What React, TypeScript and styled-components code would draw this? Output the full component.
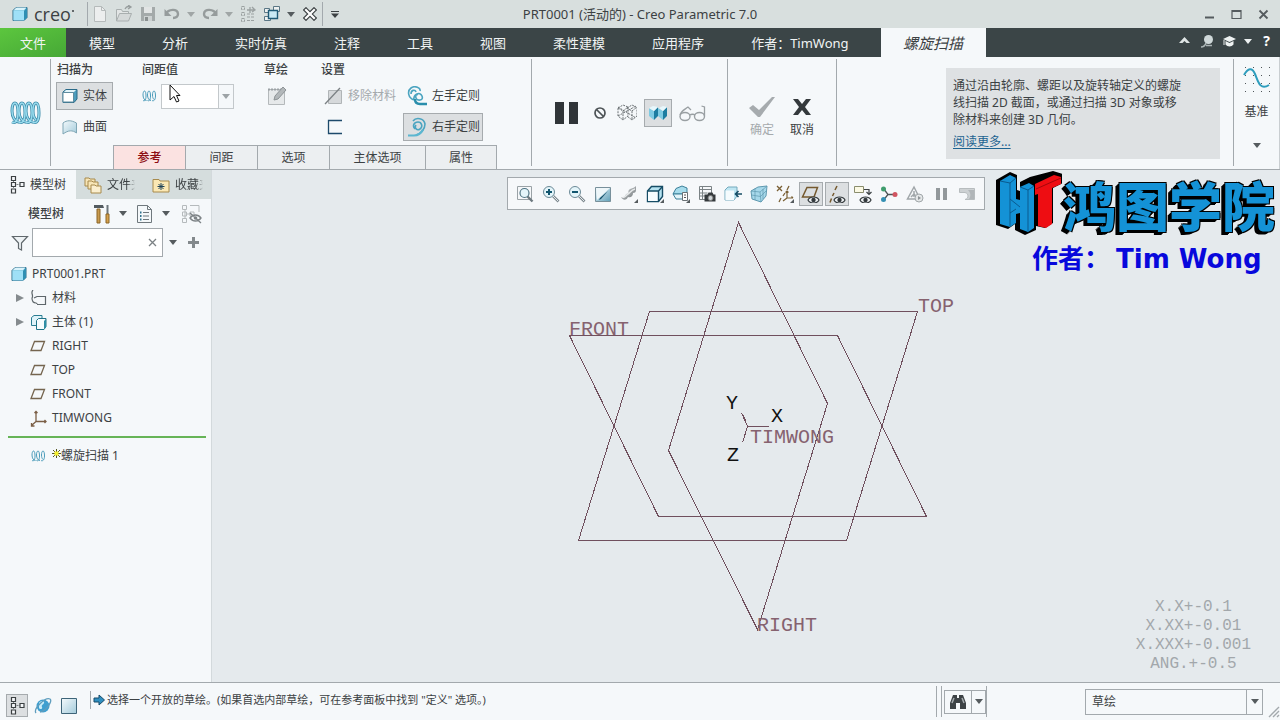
import React from "react";
import styled, { createGlobalStyle, css } from "styled-components";

const line = "#a3a9ad";

const GlobalStyle = createGlobalStyle`
  * { box-sizing: border-box; }
  body { margin: 0; }
  body, button, input, select {
    font-family: "Noto Sans", "Noto Sans CJK SC", sans-serif;
    font-size: 12px;
    line-height: 16px;
    color: #3c4143;
  }
  button { border: 0; padding: 0; background: none; }
  svg { display: block; flex: none; }
`;

const Page = styled.div`
  min-height: 100vh;
  display: flex;
  flex-direction: column;
  background: #f5f8fa;
`;

const GradientDefs = styled.svg`
  position: absolute;
`;

/* ---------- title bar ---------- */

const TitleBar = styled.header`
  height: 28px;
  display: grid;
  grid-template-columns: 1fr auto 1fr;
  align-items: center;
  background: #d8dfde;
`;

const QuickAccess = styled.div`
  display: flex;
  align-items: center;
  height: 28px;
`;

const Brand = styled.div`
  width: 87px;
  padding-left: 12px;
  display: flex;
  align-items: center;
  gap: 6px;
`;

const BrandName = styled.span`
  display: flex;
  align-items: center;
  gap: 1px;
  font-family: "Open Sans", sans-serif;
  font-size: 18px;
  line-height: 24px;
`;

const QuickButton = styled.button<{ $narrow?: boolean }>`
  width: ${(p) => (p.$narrow ? 14 : 24)}px;
  height: 24px;
  display: flex;
  align-items: center;
  justify-content: center;
`;

const QuickRule = styled.span`
  width: 1px;
  height: 24px;
  background: ${line};
`;

const WindowTitle = styled.h1`
  margin: 0;
  font-size: 13px;
  font-weight: 400;
  line-height: 20px;
`;

const WindowButtons = styled.div`
  display: flex;
  justify-content: flex-end;
  padding-right: 3px;
`;

const WindowButton = styled.button`
  width: 27px;
  height: 24px;
  display: flex;
  align-items: center;
  justify-content: center;
`;

/* ---------- menu tabs ---------- */

const MenuBar = styled.nav`
  height: 29px;
  display: flex;
  background: #3b4547;
`;

const MenuTab = styled.button<{ $kind?: "file" | "active" }>`
  padding: 0 24px 0 23px;
  font-size: 13px;
  line-height: 20px;
  color: #f1f4f4;
  ${(p) =>
    p.$kind === "file" &&
    css`
      width: 66px;
      padding: 0;
      background: linear-gradient(160deg, #5cc63e, #46a836);
    `}
  ${(p) =>
    p.$kind === "active" &&
    css`
      width: 105px;
      margin-left: 8px;
      padding: 0;
      font-size: 15px;
      font-style: italic;
      color: #3c4143;
      background: #f5f8fa;
    `}
`;

const MenuTools = styled.div`
  margin-left: auto;
  padding: 0 2px 3px 0;
  display: flex;
  align-items: center;
`;

const MenuTool = styled.button<{ $w: number }>`
  width: ${(p) => p.$w}px;
  height: 20px;
  display: flex;
  align-items: center;
  justify-content: center;
  font-size: 14px;
  font-weight: 700;
  color: #fff;
`;

/* ---------- ribbon ---------- */

const Ribbon = styled.section`
  height: 113px;
  display: flex;
  border-bottom: 1px solid ${line};
`;

const RibbonRule = styled.span`
  width: 1px;
  margin: 2px 0 3px;
  background: ${line};
`;

const FeatureIcon = styled.div`
  width: 50px;
  display: flex;
  align-items: center;
  justify-content: center;
`;

const Dashboard = styled.div`
  width: 480px;
  display: flex;
  flex-direction: column;
  justify-content: space-between;
`;

const Settings = styled.div`
  display: flex;
  gap: 28px;
  padding: 4px 0 0 5px;
`;

const SettingColumn = styled.div<{ $w?: number }>`
  display: flex;
  flex-direction: column;
  gap: 3px;
  width: ${(p) => (p.$w ? `${p.$w}px` : "auto")};
`;

const SettingTitle = styled.h2`
  margin: 0;
  height: 18px;
  padding-left: 1px;
  font-size: 12px;
  font-weight: 500;
  line-height: 18px;
`;

const SettingRow = styled.div`
  display: flex;
  align-items: center;
  height: 28px;
`;

const RibbonButton = styled.button<{ $on?: boolean; $w?: number; $off?: boolean }>`
  width: ${(p) => (p.$w ? `${p.$w}px` : "auto")};
  height: 28px;
  padding: 0 3px;
  display: flex;
  align-items: center;
  gap: 5px;
  white-space: nowrap;
  color: ${(p) => (p.$off ? "#a5aaad" : "#3c4143")};
  border: 1px solid ${(p) => (p.$on ? "#a6abae" : "transparent")};
  background: ${(p) => (p.$on ? "#dcdfe1" : "none")};
`;

const PitchInput = styled.input`
  width: 58px;
  height: 25px;
  margin-left: 4px;
  border: 1px solid #c3c8cb;
  background: #fff;
`;

const PitchArrow = styled.button`
  width: 16px;
  height: 25px;
  margin-left: -1px;
  display: flex;
  align-items: center;
  justify-content: center;
  border: 1px solid #c3c8cb;
`;

const PanelTabs = styled.div`
  display: flex;
  padding-left: 62px;
`;

const PanelTab = styled.button<{ $w: number; $required?: boolean }>`
  width: ${(p) => p.$w}px;
  height: 24px;
  border: 1px solid ${line};
  border-bottom: 0;
  border-right-width: 0;
  &:last-child { border-right-width: 1px; }
  color: ${(p) => (p.$required ? "#8c0b12" : "#3c4143")};
  font-weight: ${(p) => (p.$required ? 500 : 400)};
  background: ${(p) => (p.$required ? "#fbe2e1" : "#eceff1")};
`;

const PreviewGroup = styled.div`
  width: 195px;
  padding-left: 19px;
  display: flex;
  align-items: center;
  gap: 3px;
`;

const ConfirmGroup = styled.div`
  width: 108px;
  display: flex;
  align-items: center;
  justify-content: center;
`;

const ConfirmButton = styled.button<{ $off?: boolean }>`
  width: 40px;
  padding-top: 8px;
  display: flex;
  flex-direction: column;
  align-items: center;
  gap: 4px;
  color: ${(p) => (p.$off ? "#a5aaad" : "#3c4143")};
`;

const HelpBox = styled.aside`
  width: 274px;
  height: 91px;
  margin: 11px 13px 0 auto;
  padding: 9px 7px;
  line-height: 17px;
  white-space: nowrap;
  background: #dee1e3;
`;

const HelpText = styled.p`
  margin: 0 0 5px;
`;

const HelpLink = styled.a`
  color: #1d6391;
  text-underline-offset: 2px;
`;

const DatumGroup = styled.button`
  width: 46px;
  padding: 9px 0 0;
  display: flex;
  flex-direction: column;
  align-items: center;
  gap: 11px;
  border-right: 1px solid #c9ced1;
`;

/* ---------- model tree ---------- */

const Workspace = styled.main`
  flex: 1;
  display: flex;
`;

const Sidebar = styled.aside`
  width: 212px;
  display: flex;
  flex-direction: column;
  border-right: 1px solid #d3d9dc;
`;

const SideTabs = styled.div`
  height: 29px;
  display: flex;
  background: #d5dddd;
`;

const SideTab = styled.button<{ $on?: boolean; $w: number }>`
  width: ${(p) => p.$w}px;
  padding-left: ${(p) => (p.$on ? 10 : 8)}px;
  display: flex;
  align-items: center;
  gap: 5px;
  background: ${(p) => (p.$on ? "#f5f8fa" : "none")};
`;

const FadedLabel = styled.span`
  width: 28px;
  overflow: hidden;
  white-space: nowrap;
  mask-image: linear-gradient(90deg, #000 75%, transparent);
`;

const TreeHeader = styled.div`
  height: 29px;
  padding-left: 28px;
  display: flex;
  align-items: center;
`;

const TreeTitle = styled.h2`
  margin: 0;
  width: 64px;
  font-size: 12px;
  font-weight: 500;
`;

const TreeTool = styled.button<{ $w: number }>`
  width: ${(p) => p.$w}px;
  height: 24px;
  display: flex;
  align-items: center;
  justify-content: center;
`;

const SearchRow = styled.div`
  height: 29px;
  padding-left: 8px;
  display: flex;
  align-items: center;
`;

const SearchField = styled.label`
  width: 131px;
  height: 29px;
  display: flex;
  align-items: center;
  border: 1px solid ${line};
  background: #fff;
`;

const SearchInput = styled.input`
  flex: 1;
  min-width: 0;
  height: 24px;
  border: 0;
  outline: 0;
  background: none;
`;

const Tree = styled.ul`
  margin: 5px 5px 0 8px;
  padding: 0;
  list-style: none;
`;

const TreeNode = styled.li<{ $root?: boolean }>`
  height: 24px;
  padding-left: ${(p) => (p.$root ? 3 : 8)}px;
  display: flex;
  align-items: center;
`;

const Expander = styled.span`
  width: 14px;
`;

const NodeIcon = styled.span<{ $root?: boolean }>`
  width: ${(p) => (p.$root ? 21 : 22)}px;
`;

const InsertLine = styled.li`
  height: 2px;
  margin: 6px 0;
  background: #66b457;
`;

/* ---------- graphics area ---------- */

const Viewport = styled.section`
  position: relative;
  flex: 1;
  min-width: 0;
  display: flex;
  flex-direction: column;
  align-items: center;
  padding-top: 7px;
  background: #e5eaed;
`;

const ViewToolbar = styled.div`
  height: 33px;
  padding: 0 5px;
  display: flex;
  align-items: center;
  gap: 2px;
  border: 1px solid ${line};
  background: #f6f8fa;
`;

const ViewButton = styled.button<{ $on?: boolean }>`
  width: 24px;
  height: 24px;
  display: flex;
  align-items: center;
  justify-content: center;
  border: 1px solid ${(p) => (p.$on ? "#a6abae" : "transparent")};
  background: ${(p) => (p.$on ? "#dcdfe1" : "none")};
`;

const Drawing = styled.svg`
  margin-top: 5px;
  overflow: visible;
  font-family: "Liberation Sans Narrow", "Liberation Mono", monospace;
  font-size: 20px;
  fill: #86626f;
`;

const Watermark = styled.div`
  position: absolute;
  top: 0;
  right: 5px;
`;

const WatermarkName = styled.div`
  display: flex;
  align-items: center;
  gap: 1px;
  height: 68px;
  font-family: "Noto Sans CJK SC", sans-serif;
  font-size: 53px;
  font-weight: 900;
  line-height: 68px;
  color: #1492d6;
  text-shadow: -1px -1px 0 #000, 1px -1px 0 #000, 1px 1px 0 #000, -2px 1px 0 #000, -3px 2px 0 #000, -4px 3px 0 #000;
`;

const WatermarkAuthor = styled.div`
  display: flex;
  gap: 6px;
  padding-left: 36px;
  margin-top: 5px;
  font-family: "DejaVu Sans", "Noto Sans CJK SC", sans-serif;
  font-size: 26px;
  font-weight: 700;
  line-height: 32px;
  color: #0808dc;
`;

const Tolerances = styled.div`
  position: absolute;
  right: 29px;
  bottom: 8px;
  font-family: "Liberation Mono", monospace;
  font-size: 16px;
  line-height: 19px;
  text-align: center;
  color: #a2a7ab;
`;

/* ---------- status bar ---------- */

const StatusBar = styled.footer`
  height: 38px;
  display: flex;
  align-items: center;
  border-top: 1px solid ${line};
`;

const StatusToggles = styled.div`
  width: 90px;
  padding: 8px 0 0 6px;
  display: flex;
  gap: 4px;
`;

const StatusToggle = styled.button<{ $on?: boolean }>`
  width: 22px;
  height: 23px;
  display: flex;
  align-items: center;
  justify-content: center;
  border: 1px solid ${(p) => (p.$on ? "#a6abae" : "transparent")};
  background: ${(p) => (p.$on ? "#dcdfe1" : "none")};
`;

const Message = styled.p`
  flex: 1;
  margin: 0 0 4px;
  padding-left: 2px;
  height: 18px;
  display: flex;
  align-items: center;
  gap: 2px;
  font-size: 11px;
  border-left: 1px solid ${line};
`;

const FinderGroup = styled.div`
  height: 31px;
  padding: 0 1px 0 4px;
  margin-right: 98px;
  display: flex;
  align-items: center;
  border: solid ${line};
  border-width: 0 1px;
  &::before {
    content: "";
    height: 31px;
    margin-right: 2px;
    border-left: 1px solid ${line};
  }
`;

const FinderButton = styled.button<{ $w: number }>`
  width: ${(p) => p.$w}px;
  height: 24px;
  margin-right: -1px;
  display: flex;
  align-items: center;
  justify-content: center;
  border: 1px solid ${line};
`;

const FilterField = styled.label`
  width: 178px;
  height: 26px;
  display: flex;
  align-items: center;
  border: 1px solid ${line};
`;

const FilterSelect = styled.select`
  flex: 1;
  height: 24px;
  padding: 0 6px;
  appearance: none;
  border: 0;
  background: none;
`;

const FilterArrow = styled.span`
  width: 16px;
  height: 24px;
  display: flex;
  align-items: center;
  justify-content: center;
  border-left: 1px solid ${line};
`;

const Pointer = styled.svg`
  position: absolute;
  left: 169px;
  top: 84px;
`;

/* ---------- icons ---------- */

type IconProps = { w?: number; h?: number; children: React.ReactNode };

const Icon = ({ w = 18, h = 18, children }: IconProps) => (
  <svg width={w} height={h} viewBox={`0 0 ${w} ${h}`} fill="none" aria-hidden="true">
    {children}
  </svg>
);

const Caret = ({ color = "#555b5e" }: { color?: string }) => (
  <Icon w={8} h={5}><path d="M0 0h8L4 5z" fill={color} /></Icon>
);

const Cube = () => (
  <Icon w={16} h={16}>
    <path d="M1 4.500l3-3h11v10l-3 3H1z" fill="#7fc3dc" stroke="#2a6a88" />
    <path d="M1.500 4.500H12v10H1.500z" fill="#9fe0f7" />
    <path d="M12 5l3-3.500v10l-3 3z" fill="#2f8fb3" />
    <path d="M2 4l2.500-2.500h10L12 4z" fill="#d9f3fb" />
  </Icon>
);

const coilPath = (x: number) =>
  `M${x - 4} 21c4 2 6-2 6-9 0-6-1-10-3-10s-3 4-3 8c0 6 3 11 7 11`;

const Coil = ({ big }: { big?: boolean }) => {
  const turns = big ? [7, 14, 21] : [8, 17];
  const last = big ? "M24 21c4 2 6-2 6-9 0-6-1-10-3-10s-3 4-3 8c0 4 1 7 3 9" : "M22 21c4 2 7-2 7-9 0-6-1-10-3-10s-3 4-3 8c0 4 1 7 3 9";
  const paths = [...turns.map(coilPath), last];
  return (
    <svg width={big ? 32 : 16} height={big ? 24 : 12} viewBox="0 0 32 24" fill="none" aria-hidden="true">
      {paths.map((d) => <path key={d} d={d} stroke={big ? "#3d8dab" : "#4b9cba"} strokeWidth={big ? 3 : 2} />)}
      {big && paths.map((d) => <path key={d} d={d} stroke="#9adcee" strokeWidth="1.400" />)}
    </svg>
  );
};

const TreeGlyph = () => (
  <Icon w={15} h={19}>
    <path d="M3.500 5v9M3.500 9.500H10" stroke="#7d8386" strokeDasharray="2 1" />
    <path d="M1.500 1.500h4v4h-4zM1.500 7.500h4v4h-4zM1.500 14h4v4h-4zM10 7.500h4v4h-4z" fill="#f5f8fa" stroke="#3c4143" strokeWidth="1.200" />
  </Icon>
);

const PlaneGlyph = () => (
  <Icon w={16} h={12}><path d="M4.500 1.500h10l-3.500 9H1z" stroke="#75654f" strokeWidth="1.300" /></Icon>
);

const Eye = () => (
  <g>
    <path d="M7 15c2-4 9-4 11 0-2 4-9 4-11 0z" fill="#eef1f2" stroke="#33393c" strokeWidth="1.200" />
    <circle cx="12.500" cy="15" r="2.200" fill="#33393c" />
  </g>
);

const Lens = ({ sign }: { sign: "plus" | "minus" }) => (
  <Icon>
    <path d="M11 11l5.500 5.500" stroke="#7e8a90" strokeWidth="2.600" />
    <path d="M11 11l5 5" stroke="#e3e8ea" />
    <circle cx="7" cy="7" r="5.500" fill="#e4f5fa" stroke="#6c8a97" />
    <path d={sign === "plus" ? "M4 7h6M7 4v6" : "M4 7h6"} stroke="#12566f" strokeWidth="2" />
  </Icon>
);

const Corner = () => <path d="M18 14v4h-4z" fill="#555b5e" />;

const viewTools: { name: string; on?: boolean; icon: React.ReactNode }[] = [
  { name: "重新调整", icon: <Icon><path d="M1.500 1.500h14v13h-14z" stroke="#9aa2a6" /><path d="M11 11l5.500 5.500" stroke="#6e7a80" strokeWidth="2.400" /><circle cx="8.500" cy="8" r="4.500" fill="#e4f5fa" stroke="#4f7483" strokeWidth="1.200" /></Icon> },
  { name: "放大", icon: <Lens sign="plus" /> },
  { name: "缩小", icon: <Lens sign="minus" /> },
  { name: "重画", icon: <Icon><path d="M1.500 2.500h15v14h-15z" fill="url(#steel)" stroke="#78909b" /><path d="M2 3h14L3 15z" fill="#eef6f9" /><path d="M14 6l-7 8-2 1 1-2z" fill="#134c66" /></Icon> },
  { name: "渲染选项", icon: <Icon><path d="M1 12c2 4 6 3 7 0 3 1 5-1 5-4 2 0 3-1 3-3V1c-2 2-4 2-6 3-2 1-2 3-1 5-2-1-3 0-4 2-1 2-2 2-4 1z" fill="url(#grey)" /><path d="M3 12c2 1 3-2 5-3s3-4 7-5" stroke="#e6e9ea" strokeWidth="1.500" /><Corner /></Icon> },
  { name: "显示样式", icon: <Icon><path d="M1.500 6l4-4.500h11v10l-4 5h-11z" fill="#b5e2f0" stroke="#174d66" strokeWidth="1.400" /><path d="M2 6h10v10H2z" fill="#f7fcfe" /><path d="M1.500 6h11v10.500M12.500 6l4-4.500" stroke="#174d66" strokeWidth="1.400" /><Corner /></Icon> },
  { name: "已保存方向", icon: <Icon><path d="M4 3.500l6-2.500 5 2v6H1z" fill="#a6dcec" stroke="#3b7f99" /><path d="M1 9h13l-2 5H4z" fill="#e3f4f9" stroke="#3b7f99" /><path d="M10.500 7.500h5v8h-5z" fill="#fff" stroke="#6a7175" /><path d="M12 10h2M12 12.500h2" stroke="#555" /><Corner /></Icon> },
  { name: "视图管理器", icon: <Icon><path d="M1.500 1.500h12v13h-12zM1.500 4.500h12M1.500 8h8M1.500 11h8M4.500 1.500v13" stroke="#7b8285" /><path d="M6.500 9.500h3l1-2h4l1 2h2v7h-11z" fill="#34393c" /><circle cx="12.500" cy="13" r="2.500" fill="#cfd5d8" stroke="#777" /></Icon> },
  { name: "透视图", icon: <Icon><path d="M1 5l3-3h9v9l-3 4H1z" fill="#bfe6f2" stroke="#74aabd" /><path d="M1.500 5.500H10V15H1.500z" fill="#f4fbfd" /><path d="M18 9h-6M14.500 6l-3 3 3 3" stroke="#174d66" strokeWidth="1.600" /></Icon> },
  { name: "截面", icon: <Icon><path d="M1 6l7-4 9-1-1 10-5 6-9-3z" fill="#a6d8ea" stroke="#5f99b0" /><path d="M1 6l9 1 7-6M10 7l1 10M5 3.500V15M13 4v10M1.500 10l9 1.500L16 6" stroke="#5f99b0" strokeWidth=".7" /></Icon> },
  { name: "基准显示过滤器", icon: <Icon><path d="M1 1l5 5M6 1L1 6M13 1l-2 4M9 8l-2 3M5 13l-2 4" stroke="#7a6035" strokeWidth="1.300" /><path d="M11 6v7h6M11 13l-4 3M9.500 7.500L11 6l1.500 1.500M15.500 11.500L17 13" stroke="#7a6035" strokeWidth="1.200" /><Corner /></Icon> },
  { name: "平面显示", on: true, icon: <Icon w={20}><path d="M6 2.500h10.500L13 12H1.500z" stroke="#75592e" strokeWidth="1.500" /><Eye /></Icon> },
  { name: "轴显示", on: true, icon: <Icon w={20}><path d="M10 1L8 5M7 8l-1.500 3M4.500 13.500l-1.500 4" stroke="#75592e" strokeWidth="1.500" /><Eye /></Icon> },
  { name: "注释显示", icon: <Icon w={20}><path d="M1.500 1.500h9v6h-9z" fill="#fbf9e4" stroke="#8a8d6d" /><path d="M11 4.500h5V9M13.500 7l2.500 2.500L18.500 7" stroke="#3c4143" strokeWidth="1.200" /><Eye /></Icon> },
  { name: "旋转中心", icon: <Icon><path d="M3.500 3.500L8 9.500l-4 5M8 9.500h7" stroke="#4c5356" strokeWidth="1.300" /><circle cx="3.500" cy="4" r="2.500" fill="#3f9d6d" /><circle cx="3.500" cy="14.500" r="2.500" fill="#348fb3" /><circle cx="15" cy="9.500" r="2.500" fill="#d05561" /></Icon> },
  { name: "仿真", icon: <Icon><path d="M8 2l6 12H1.500zM8 6v6M5 12l3-3 3 3" stroke="#a1a7aa" strokeWidth="1.500" /><circle cx="13" cy="13" r="4" fill="#e4e7e8" stroke="#a1a7aa" /><path d="M12 11l3 2-3 2z" fill="#8e9497" /></Icon> },
  { name: "暂停仿真", icon: <Icon><path d="M4 3h4v12H4zM11 3h4v12h-4z" fill="#92989b" /></Icon> },
  { name: "仿真结果", icon: <Icon><path d="M1.500 3.500h15v11H7c4-1 4-6 0-7H1.500z" fill="#cdd1d3" stroke="#b7bcbe" /><path d="M10 5h6v9h-5c2-3 2-6-1-9z" fill="#b1b6b9" /></Icon> },
];

const menuItems = ["模型", "分析", "实时仿真", "注释", "工具", "视图", "柔性建模", "应用程序", "作者：TimWong"];

const planes = ["RIGHT", "TOP", "FRONT"];

const Arrow = () => (
  <Icon w={8} h={10}><path d="M0 1l8 4-8 4z" fill="#858b8e" /></Icon>
);

const HandCurl = ({ right }: { right?: boolean }) => (
  <Icon w={20} h={20}>
    {right ? (
      <>
        <path d="M6 4c3-4 11-3 12 3 0 5-4 10-9 11M8 12c-3-3-1-7 3-7s5 5 2 7-6-1-4-4" stroke="#4ba4c0" strokeWidth="1.600" />
        <path d="M1 18.500h6c4 0 7-2 9-6" stroke="#5bb6d0" strokeWidth="2.200" />
      </>
    ) : (
      <>
        <path d="M7 14C1 12 0 5 4 2s10 0 9 3M7 14c-1-6 6-9 8-4s-5 5-6 2 1-4 2-3M4 8c0-4 4-5 5-2" stroke="#4ba4c0" strokeWidth="1.600" />
        <path d="M8 13c0 4 2 5 5 5h7" stroke="#2a8eac" strokeWidth="2.400" />
      </>
    )}
  </Icon>
);

export default function App() {
  return (
    <Page>
      <GlobalStyle />
      <GradientDefs width="0" height="0" aria-hidden="true">
        <defs>
          <linearGradient id="steel" x1="0" y1="0" x2="1" y2="1">
            <stop offset="0" stopColor="#eef8fb" />
            <stop offset="1" stopColor="#5f9fb8" />
          </linearGradient>
          <linearGradient id="sheet" x1="0" y1="0" x2="1" y2="1">
            <stop offset="0" stopColor="#f4fafc" />
            <stop offset="1" stopColor="#a3cbdb" />
          </linearGradient>
          <linearGradient id="grey" x1="0" y1="0" x2="1" y2="1">
            <stop offset="0" stopColor="#d8dcde" />
            <stop offset="1" stopColor="#6d7376" />
          </linearGradient>
        </defs>
      </GradientDefs>

      <TitleBar>
        <QuickAccess>
          <Brand><Cube /><BrandName>creo<Icon w={2} h={8}><circle cx="1" cy="1" r="1" fill="#3c4143" /></Icon></BrandName></Brand>
          <QuickRule />
          <QuickButton aria-label="新建"><Icon><path d="M3.500 1.500h7l4 4v11h-11z" fill="#eceeee" stroke="#b5baba" /><path d="M10.500 1.500v4h4" stroke="#b5baba" /></Icon></QuickButton>
          <QuickButton aria-label="打开"><Icon><path d="M1.500 16V4.500h5l1 2h6V9" fill="#e2e5e5" stroke="#a9afaf" /><path d="M1.500 16l3-7.500h12l-3 7.500z" fill="#d5d9d9" stroke="#a9afaf" /><path d="M10 4c1-2 3-3 5-2M13 0l3 2-3 2" stroke="#979d9d" strokeWidth="1.300" /></Icon></QuickButton>
          <QuickButton aria-label="保存"><Icon><path d="M2 2h14v14H2z" fill="#a4aaaa" /><path d="M5 2h8v6H5z" fill="#e2e5e5" /><path d="M5 11h8v5H5z" fill="#cdd2d2" /><path d="M6 12h3v4H6z" fill="#8a9090" /></Icon></QuickButton>
          <QuickButton aria-label="撤销"><Icon><path d="M3 9c2-5 12-6 12 0 0 3-2 4-5 4" stroke="#969c9c" strokeWidth="2.400" /><path d="M1.500 4v7h7z" fill="#969c9c" /></Icon></QuickButton>
          <QuickButton $narrow aria-label="撤销列表"><Caret color="#a0a6a6" /></QuickButton>
          <QuickButton aria-label="重做"><Icon><path d="M15 9C13 4 3 3 3 9c0 3 2 4 5 4" stroke="#969c9c" strokeWidth="2.400" /><path d="M16.500 4v7h-7z" fill="#969c9c" /></Icon></QuickButton>
          <QuickButton $narrow aria-label="重做列表"><Caret color="#a0a6a6" /></QuickButton>
          <QuickButton aria-label="重新生成"><Icon><path d="M2.500 1.500h3v3h-3zM2.500 7.500h3v3h-3zM2.500 13.500h3v3h-3zM8 9h7M8 12h7M8 15.500h7" stroke="#9ba1a1" strokeDasharray="3 1" /><path d="M8 5h7M11 2v6M13 2l3 3-3 2" stroke="#9ba1a1" strokeWidth="1.300" /></Icon></QuickButton>
          <QuickButton aria-label="窗口"><Icon><path d="M1.500 3.500h5v4h-5zM1.500 11.500h6v4h-6zM10.500 1.500h6v5h-6z" fill="#eef1f1" stroke="#5b7785" /><path d="M5.500 5.500h9v8h-9z" fill="#c9e9f4" stroke="#1f5a76" strokeWidth="1.400" /></Icon></QuickButton>
          <QuickButton $narrow aria-label="窗口列表"><Caret /></QuickButton>
          <QuickButton aria-label="关闭"><Icon w={14} h={14}><path d="M3 3l8 8M11 3l-8 8" stroke="#3c4143" strokeWidth="4.500" strokeLinecap="square" /><path d="M3 3l8 8M11 3l-8 8" stroke="#fff" strokeWidth="2.200" strokeLinecap="square" /></Icon></QuickButton>
          <QuickRule />
          <QuickButton aria-label="自定义快速访问"><Icon w={10} h={9}><path d="M1 1.500h8" stroke="#3c4143" /><path d="M1 3.500h8L5 8z" fill="#3c4143" /></Icon></QuickButton>
        </QuickAccess>
        <WindowTitle>PRT0001 (活动的) - Creo Parametric 7.0</WindowTitle>
        <WindowButtons>
          <WindowButton aria-label="最小化"><Icon w={11} h={11}><path d="M1 8.500h9" stroke="#555b5e" strokeWidth="2" /></Icon></WindowButton>
          <WindowButton aria-label="最大化"><Icon w={11} h={11}><path d="M1 1.500h9v8H1zM1 2.500h9" stroke="#555b5e" strokeWidth="1.200" /></Icon></WindowButton>
          <WindowButton aria-label="关闭窗口"><Icon w={11} h={11}><path d="M1.500 1.500l8 8M9.500 1.500l-8 8" stroke="#555b5e" strokeWidth="1.800" /></Icon></WindowButton>
        </WindowButtons>
      </TitleBar>

      <MenuBar>
        <MenuTab $kind="file">文件</MenuTab>
        {menuItems.map((m) => <MenuTab key={m}>{m}</MenuTab>)}
        <MenuTab $kind="active">螺旋扫描</MenuTab>
        <MenuTools>
          <MenuTool $w={22} aria-label="折叠功能区"><Icon w={11} h={8}><path d="M0 6l5.500-6L11 6H7.500l-2-2-2 2z" fill="#dfe5e5" /></Icon></MenuTool>
          <MenuTool $w={23} aria-label="搜索"><Icon w={14} h={14}><circle cx="8.500" cy="5.500" r="4.500" fill="#cfd8d9" /><path d="M6 9c-1 3-3 4-5 4M6 11.500h6" stroke="#aab4b5" strokeWidth="1.500" /></Icon></MenuTool>
          <MenuTool $w={23} aria-label="学习"><Icon w={13} h={11}><path d="M6.500 0L13 3 6.500 6 0 3z" fill="#eef2f2" /><path d="M2.500 5v3.500c2 2.500 6 2.500 8 0V5l-4 2z" fill="#eef2f2" /><path d="M1 4v5" stroke="#eef2f2" /></Icon></MenuTool>
          <MenuTool $w={14} aria-label="学习菜单"><Caret color="#eef2f2" /></MenuTool>
          <MenuTool $w={23} aria-label="帮助">?</MenuTool>
        </MenuTools>
      </MenuBar>

      <Ribbon>
        <FeatureIcon><Coil big /></FeatureIcon>
        <RibbonRule />
        <Dashboard>
          <Settings>
            <SettingColumn $w={57}>
              <SettingTitle>扫描为</SettingTitle>
              <RibbonButton $on><Icon w={18} h={16}><path d="M3 4l3-2.500h11v9.500l-3 3.500H3z" fill="#4c9dbd" stroke="#2a6a88" /><path d="M3 4.500h10.500V14H3z" fill="#fff" stroke="#5f8ca0" /><path d="M4 4l2-2h10l-2 2z" fill="#e2f4fa" /></Icon>实体</RibbonButton>
              <RibbonButton><Icon w={18} h={16}><path d="M3 4c4-3 8-3 13.500 0v10c-4-3-8-3-13.500 1z" fill="url(#sheet)" stroke="#7fa6b5" /></Icon>曲面</RibbonButton>
            </SettingColumn>
            <SettingColumn $w={94}>
              <SettingTitle>间距值</SettingTitle>
              <SettingRow>
                <Coil />
                <PitchInput aria-label="间距值" />
                <PitchArrow aria-label="间距值列表"><Caret color="#9da3a6" /></PitchArrow>
              </SettingRow>
            </SettingColumn>
            <SettingColumn $w={29}>
              <SettingTitle>草绘</SettingTitle>
              <RibbonButton $off aria-label="草绘"><Icon w={20} h={20}><path d="M1.500 3.500h16v15h-16z" fill="#e6e9ea" stroke="#b4b9bb" /><path d="M1 3.500h14" stroke="#9ca2a5" strokeWidth="2" strokeDasharray="2 1" /><path d="M16 1l3 3-8 9-4 1 1-4z" fill="#b3b8ba" stroke="#8d9396" /></Icon></RibbonButton>
            </SettingColumn>
            <SettingColumn>
              <SettingTitle>设置</SettingTitle>
              <SettingRow>
                <RibbonButton $off $w={83}><Icon w={19} h={18}><path d="M4.500 3.500h13v13h-13z" fill="#d6d9db" stroke="#b0b5b7" /><path d="M1 17L16 1" stroke="#7b8184" strokeWidth="1.300" /></Icon>移除材料</RibbonButton>
                <RibbonButton $w={80}><HandCurl />左手定则</RibbonButton>
              </SettingRow>
              <SettingRow>
                <RibbonButton $w={83} aria-label="反向"><Icon w={19} h={18}><path d="M18 2.500H4.500v13H18" stroke="#1d4a6b" strokeWidth="1.300" /></Icon></RibbonButton>
                <RibbonButton $on $w={80}><HandCurl right />右手定则</RibbonButton>
              </SettingRow>
            </SettingColumn>
          </Settings>
          <PanelTabs>
            <PanelTab $w={72} $required>参考</PanelTab>
            <PanelTab $w={72}>间距</PanelTab>
            <PanelTab $w={72}>选项</PanelTab>
            <PanelTab $w={96}>主体选项</PanelTab>
            <PanelTab $w={72}>属性</PanelTab>
          </PanelTabs>
        </Dashboard>
        <RibbonRule />
        <PreviewGroup>
          <RibbonButton $w={36} aria-label="暂停"><Icon w={24} h={22}><path d="M0 0h9v22H0zM14 0h9v22h-9z" fill="#303538" /></Icon></RibbonButton>
          <RibbonButton $w={20} aria-label="无预览"><Icon w={12} h={12}><circle cx="6" cy="6" r="5" stroke="#4d5356" strokeWidth="1.700" /><path d="M2.500 2.500l7 7" stroke="#4d5356" strokeWidth="1.700" /></Icon></RibbonButton>
          <RibbonButton $w={28} aria-label="分离预览"><Icon w={20} h={18}><path d="M1 4l5 3v9l-5-4zM6 7l5-4v9l-5 4M1 4l5-3 5 2M10 4l5 3v9l-5-4M15 7l5-4v9l-5 4M10 4l5-3 4 2M1 12l18-10M1 3l18 11" stroke="#6b7174" strokeDasharray="2 1" /></Icon></RibbonButton>
          <RibbonButton $on $w={28} aria-label="连接预览"><Icon w={20} h={18}><path d="M1 4l5 3v9l-5-4zM10 4l5 3v9l-5-4z" fill="#7fcbe3" /><path d="M6 7l4-4v9l-4 4zM15 7l4-4v9l-4 4z" fill="#1d7da1" /><path d="M1 4l4-2 5 1-4 4zM11 4l4-2 4 1-4 4z" fill="#e7f7fc" /></Icon></RibbonButton>
          <RibbonButton $w={34} aria-label="特征预览"><Icon w={27} h={18}><ellipse cx="6" cy="12.500" rx="5" ry="4" stroke="#999fa2" strokeWidth="1.400" /><ellipse cx="20.500" cy="12.500" rx="5" ry="4" stroke="#999fa2" strokeWidth="1.400" /><path d="M11 11c1-1 4-1 5 0M1 11c1-4 4-5 8-8l3 3M25.500 12V3l-3-1" stroke="#999fa2" strokeWidth="1.300" /></Icon></RibbonButton>
        </PreviewGroup>
        <RibbonRule />
        <ConfirmGroup>
          <ConfirmButton $off><Icon w={28} h={22}><path d="M1 12l4-3 6 5L24 1h3L12 21h-2z" fill="#a6abae" /></Icon>确定</ConfirmButton>
          <ConfirmButton><Icon w={22} h={22}><path d="M2 3h5l4 5 4-5h5l-6 8 6 8h-5l-4-5-4 5H2l6-8z" fill="#34393c" /></Icon>取消</ConfirmButton>
        </ConfirmGroup>
        <RibbonRule />
        <HelpBox>
          <HelpText>
            通过沿由轮廓、螺距以及旋转轴定义的螺旋<br />
            线扫描 2D 截面，或通过扫描 3D 对象或移<br />
            除材料来创建 3D 几何。
          </HelpText>
          <HelpLink href="#help">阅读更多...</HelpLink>
        </HelpBox>
        <RibbonRule />
        <DatumGroup>
          <Icon w={28} h={27}>
            <path d="M2 1.500h26M2 9.500h26M2 17.500h26M2 25.500h26" stroke="#4f5558" strokeDasharray="1 7" />
            <path d="M1 9C5 2 9 1 12 8s5 17 14 11" stroke="#2e9dbd" strokeWidth="2" />
          </Icon>
          <span>基准</span>
          <Icon w={8} h={24}><path d="M0 12h8l-4 5z" fill="#555b5e" /></Icon>
        </DatumGroup>
      </Ribbon>

      <Workspace>
        <Sidebar>
          <SideTabs>
            <SideTab $on $w={76}><TreeGlyph />模型树</SideTab>
            <SideTab $w={68}>
              <Icon><path d="M1 2h4l1 1h5v7H1z" fill="#f7e5b6" stroke="#a78a4d" /><path d="M4 5h4l1 1h5v7H4z" fill="#f7e5b6" stroke="#a78a4d" /><path d="M7 9h4l1 1h5v7H7z" fill="#fbefcf" stroke="#a78a4d" /></Icon>
              <FadedLabel>文件夹</FadedLabel>
            </SideTab>
            <SideTab $w={67}>
              <Icon><path d="M1 3.500h6l1 1.500h9v11H1z" fill="#fbe8b4" stroke="#a78a4d" /><path d="M9 7v7M5.500 10.500h7M6.500 8l5 5M11.500 8l-5 5" stroke="#1e4258" /></Icon>
              <FadedLabel>收藏夹</FadedLabel>
            </SideTab>
          </SideTabs>
          <TreeHeader>
            <TreeTitle>模型树</TreeTitle>
            <TreeTool $w={20} aria-label="设置"><Icon w={18} h={20}><path d="M4 5h3v14H4z" fill="#c99b4e" stroke="#8a6426" /><path d="M1 1h9l1 3H1z" fill="#525a5f" /><path d="M14.500 1v9" stroke="#6d777c" strokeWidth="2" /><path d="M13 10h3v9h-3z" fill="#d6a14b" stroke="#8a6426" /></Icon></TreeTool>
            <TreeTool $w={22} aria-label="设置列表"><Caret /></TreeTool>
            <TreeTool $w={21} aria-label="显示"><Icon w={17} h={20}><path d="M1.500 1.500h10l4 4v13h-14z" fill="#f4f8fa" stroke="#6f787d" /><path d="M11.500 1.500v4h4M7 8.500h6M7 12h6M7 15.500h6" stroke="#6f787d" /><path d="M4 8.500h1.500M4 12h1.500M4 15.500h1.500" stroke="#2f708c" strokeWidth="2" /></Icon></TreeTool>
            <TreeTool $w={21} aria-label="显示列表"><Caret /></TreeTool>
            <TreeTool $w={30} aria-label="预选突出显示"><Icon w={21} h={20}><path d="M1.500 1.500h4v4h-4zM1.500 8h4v4h-4zM1.500 14.500h4v4h-4zM9 8h4v4H9zM9 1.500h9V8M4 5v10M5 10h4" stroke="#b5babc" /><path d="M9 14c3-4 8-4 11 0-3 4-8 4-11 0zM9 9l11 10" stroke="#7e8487" strokeWidth="1.300" /><circle cx="14.500" cy="14" r="1.800" fill="#7e8487" /></Icon></TreeTool>
          </TreeHeader>
          <SearchRow>
            <TreeTool $w={24} aria-label="过滤"><Icon w={18} h={16}><path d="M1.500 1.500h15L10.500 8v7l-3-1.500V8z" fill="#eef3f5" stroke="#60686c" strokeWidth="1.200" /></Icon></TreeTool>
            <SearchField>
              <SearchInput aria-label="搜索模型树" />
              <TreeTool $w={19} aria-label="清除"><Icon w={9} h={9}><path d="M1 1l7 7M8 1L1 8" stroke="#7b8184" strokeWidth="1.300" /></Icon></TreeTool>
            </SearchField>
            <TreeTool $w={19} aria-label="搜索选项"><Caret /></TreeTool>
            <TreeTool $w={23} aria-label="添加"><Icon w={11} h={11}><path d="M5.500 0v11M0 5.500h11" stroke="#83898c" strokeWidth="3" /></Icon></TreeTool>
          </SearchRow>
          <Tree>
            <TreeNode $root><NodeIcon $root><Cube /></NodeIcon>PRT0001.PRT</TreeNode>
            <TreeNode>
              <Expander><Arrow /></Expander>
              <NodeIcon><Icon w={17} h={16}><path d="M3 0c-3 3 1 5-1 8 0 4 2 5 4 5 1 0 1 1 1 1M4 8l3-1.500h8.500v8H7" stroke="#5e666a" strokeWidth="1.200" /></Icon></NodeIcon>
              材料
            </TreeNode>
            <TreeNode>
              <Expander><Arrow /></Expander>
              <NodeIcon><Icon w={17} h={16}><path d="M1.500 3.500L4 1.500h8v8l-2 2H1.500z" fill="#dff3f9" stroke="#2a7d92" /><path d="M6.500 6.500l2-2h7.500v8l-2 3H6.500z" fill="#f6fcfe" stroke="#1f7387" /><path d="M14 7l2-2v8l-2 2z" fill="#2f8ea5" /></Icon></NodeIcon>
              主体 (1)
            </TreeNode>
            {planes.map((p) => (
              <TreeNode key={p}><Expander /><NodeIcon><PlaneGlyph /></NodeIcon>{p}</TreeNode>
            ))}
            <TreeNode>
              <Expander />
              <NodeIcon><Icon w={17} h={17}><path d="M6 1.500v10h10M6 11.500l-4.500 4M4.500 3L6 1.500 7.500 3M14.500 10l1.500 1.500-1.500 1.500M1.500 13v3h3" stroke="#7a5e45" strokeWidth="1.300" /></Icon></NodeIcon>
              TIMWONG
            </TreeNode>
            <InsertLine />
            <TreeNode>
              <Expander />
              <NodeIcon><Coil /></NodeIcon>
              <Icon w={9} h={15}><path d="M4.500 0v9M0 4.500h9M1 1l7 7M8 1L1 8" stroke="#55551f" /><path d="M2.500 2.500h4v4h-4z" fill="#f4ee2a" /></Icon>
              螺旋扫描 1
            </TreeNode>
          </Tree>
        </Sidebar>

        <Viewport>
          <ViewToolbar>
            {viewTools.map((t) => (
              <ViewButton key={t.name} $on={t.on} aria-label={t.name}>{t.icon}</ViewButton>
            ))}
          </ViewToolbar>
          <Drawing width="372" height="430" viewBox="0 0 372 430">
            <g fill="none" stroke="#70505e" shapeRendering="crispEdges">
              <path d="M178.500 7.500L267.500 188.500 197.500 414.500 108.500 235.500z" />
              <path d="M89.500 96.500H357.500L286.500 325.500H18.500z" />
              <path d="M9.500 120.500H277.500L366.500 301.500H98.500z" />
              <path d="M181.500 198l6 13M187.500 211.500h21M187.500 211.500l-5 16M183 200l3 6" />
            </g>
            <text x="9" y="120">FRONT</text>
            <text x="358" y="97">TOP</text>
            <text x="197" y="416">RIGHT</text>
            <text x="190" y="228">TIMWONG</text>
            <g fill="#111">
              <text x="166" y="194">Y</text>
              <text x="211" y="207">X</text>
              <text x="167" y="246">Z</text>
            </g>
          </Drawing>
          <Watermark>
            <WatermarkName>
              <Icon w={66} h={66}>
                <path d="M0 9L14 1l7 3v15l3 1v-9l10-5L57 0l10 3v9l-10 5v35l-8 5-9-2v4l-11 5-10-5v-6l-7 5L0 54z" fill="#000" />
                <path d="M4 10l10-6 6 3v21l4 1V16l9-4 5 3v42l-6 4-8-3V42l-4 1v9l-6 4-10-3z" fill="#1492d6" />
                <path d="M4 10l10 2 6-5M14 12v43M24 16l8 3 6-4M32 19v41M14 28l10 8M14 42l6-4" stroke="#0a5a8f" />
                <path d="M39 13L58 4l7 2v7l-9 4v36l-6 4-8-2V23l-3 1z" fill="#ee0d12" />
                <path d="M40 18l18-8 7-3" stroke="#a3070b" />
              </Icon>
              鸿图学院
            </WatermarkName>
            <WatermarkAuthor><span>作者：</span><span>Tim Wong</span></WatermarkAuthor>
          </Watermark>
          <Tolerances>X.X+-0.1<br />X.XX+-0.01<br />X.XXX+-0.001<br />ANG.+-0.5</Tolerances>
        </Viewport>
      </Workspace>

      <StatusBar>
        <StatusToggles>
          <StatusToggle $on aria-label="导航器"><TreeGlyph /></StatusToggle>
          <StatusToggle aria-label="浏览器"><Icon><circle cx="9" cy="9" r="6.500" fill="#3f9fd0" /><path d="M5 6c2-3 6-2 5 0s-3 2-2 4-2 3-3 1z" fill="#c9ecf8" /><path d="M2 16C-1 12 11 0 16 2c3 2-4 12-10 13" stroke="#5f9dbd" strokeWidth="1.300" /></Icon></StatusToggle>
          <StatusToggle aria-label="全屏"><Icon w={16} h={16}><path d="M.5 .5h15v15H.5z" fill="url(#sheet)" stroke="#3d6478" /></Icon></StatusToggle>
        </StatusToggles>
        <Message>
          <Icon w={12} h={12}><path d="M1 4h5V1l5.500 5L6 11V8H1z" fill="#2f8fc0" stroke="#174a68" /></Icon>
          选择一个开放的草绘。(如果首选内部草绘，可在参考面板中找到 "定义" 选项。)
        </Message>
        <FinderGroup>
          <FinderButton $w={28} aria-label="查找"><Icon w={18} h={16}><path d="M4 1h4v3h2V1h4l3 8v6h-6V9H7v6H1V9z" fill="#3d4346" /><path d="M3 9l2-5M15 9l-2-5" stroke="#a6acaf" strokeWidth="1.500" /></Icon></FinderButton>
          <FinderButton $w={15} aria-label="查找列表"><Caret /></FinderButton>
        </FinderGroup>
        <FilterField>
          <FilterSelect aria-label="选择过滤器" defaultValue="草绘"><option>草绘</option></FilterSelect>
          <FilterArrow><Caret /></FilterArrow>
        </FilterField>
        <Icon w={17} h={34}><path d="M6 32L16 22M10 32l6-6M14 32l2-2" stroke="#a3a9ad" strokeWidth="1.400" /></Icon>
      </StatusBar>

      <Pointer width="12" height="20" viewBox="0 0 12 20" aria-hidden="true">
        <path d="M1 1v15l4-3.500L7.500 18l2.500-1-2.500-5.500H11z" fill="#fff" stroke="#111" />
      </Pointer>
    </Page>
  );
}
